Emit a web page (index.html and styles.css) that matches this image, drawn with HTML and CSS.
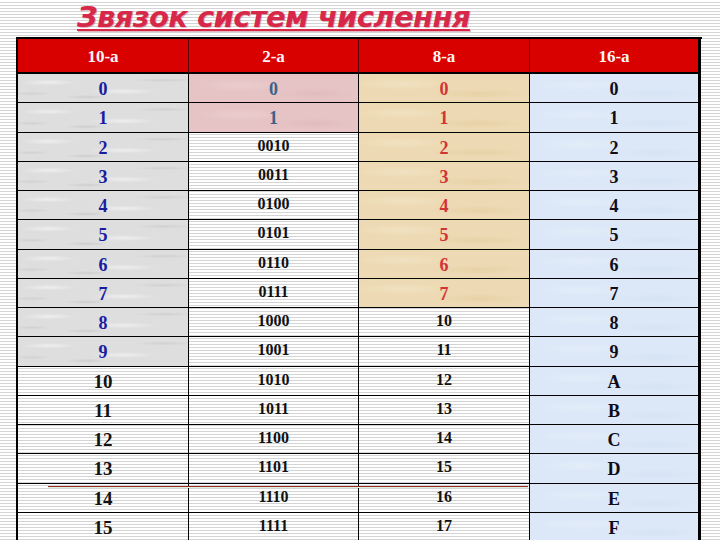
FILE: index.html
```html
<!DOCTYPE html>
<html lang="uk">
<head>
<meta charset="utf-8">
<title>Звязок систем числення</title>
<link rel="stylesheet" href="styles.css">
</head>
<body>
<div class="page">
  <h1 class="title">Звязок систем числення</h1>
  <div class="grid">
    <div class="hd">10-a</div><div class="hd">2-a</div><div class="hd">8-a</div><div class="hd last">16-a</div>

    <div class="c gray blue">0</div><div class="c pink steel">0</div><div class="c sand red">0</div><div class="c sky last">0</div>
    <div class="c gray blue">1</div><div class="c pink steel">1</div><div class="c sand red">1</div><div class="c sky last">1</div>
    <div class="c gray blue">2</div><div class="c bin">0010</div><div class="c sand red">2</div><div class="c sky last">2</div>
    <div class="c gray blue">3</div><div class="c bin">0011</div><div class="c sand red">3</div><div class="c sky last">3</div>
    <div class="c gray blue">4</div><div class="c bin">0100</div><div class="c sand red">4</div><div class="c sky last">4</div>
    <div class="c gray blue">5</div><div class="c bin">0101</div><div class="c sand red">5</div><div class="c sky last">5</div>
    <div class="c gray blue">6</div><div class="c bin">0110</div><div class="c sand red">6</div><div class="c sky last">6</div>
    <div class="c gray blue">7</div><div class="c bin">0111</div><div class="c sand red">7</div><div class="c sky last">7</div>
    <div class="c gray blue">8</div><div class="c bin">1000</div><div class="c bin">10</div><div class="c sky last">8</div>
    <div class="c gray blue">9</div><div class="c bin">1001</div><div class="c bin">11</div><div class="c sky last">9</div>
    <div class="c big">10</div><div class="c bin">1010</div><div class="c bin">12</div><div class="c sky last">A</div>
    <div class="c big">11</div><div class="c bin">1011</div><div class="c bin">13</div><div class="c sky last">B</div>
    <div class="c big">12</div><div class="c bin">1100</div><div class="c bin">14</div><div class="c sky last">C</div>
    <div class="c big">13</div><div class="c bin">1101</div><div class="c bin">15</div><div class="c sky last">D</div>
    <div class="c big">14</div><div class="c bin">1110</div><div class="c bin">16</div><div class="c sky last">E</div>
    <div class="c big">15</div><div class="c bin">1111</div><div class="c bin">17</div><div class="c sky last">F</div>
  </div>
  <div class="strike"></div>
</div>
</body>
</html>
```

FILE: styles.css
```css
html, body {
  margin: 0;
  padding: 0;
}
body {
  width: 720px;
  height: 540px;
  overflow: hidden;
  background: repeating-linear-gradient(to bottom, #ffffff 0, #ffffff 2px, #d4d4d4 2px, #d4d4d4 3px);
  font-family: "Liberation Serif", "Times New Roman", "DejaVu Serif", serif;
}
.page {
  position: relative;
  width: 720px;
  height: 540px;
}
.title {
  margin: 0;
  height: 37px;
  padding-left: 77px;
  padding-top: 2px;
  box-sizing: border-box;
  font-family: "DejaVu Sans", Verdana, sans-serif;
  font-weight: bold;
  font-style: italic;
  font-size: 29px;
  line-height: 30px;
  color: #d8284a;
  text-decoration: underline;
  text-decoration-thickness: 2px;
  text-underline-offset: 2px;
  letter-spacing: -0.6px;
  text-shadow: 1px 1px 0 rgba(150, 20, 40, 0.3);
}
.grid {
  margin-left: 16px;
  width: 686px;
  display: grid;
  grid-template-columns: 171px 170px 171px 171px;
  grid-template-rows: 35px repeat(16, 29.25px);
  border-left: 2px solid #000;
  border-top: 2px solid #000;
  box-sizing: border-box;
}
.hd {
  background: #d90000;
  color: #fff6f6;
  font-weight: bold;
  font-size: 17px;
  display: flex;
  align-items: center;
  justify-content: center;
  padding-top: 3px;
  border-right: 1px solid #5a0000;
  border-bottom: 2px solid #000;
}
.hd.last, .c.last {
  border-right: 3px solid #000;
}
.c {
  display: flex;
  align-items: center;
  justify-content: center;
  padding-top: 3px;
  font-weight: bold;
  font-size: 18px;
  color: #111;
  border-right: 1px solid #000;
  border-bottom: 1px solid #000;
}
.gray {
  background-color: #dedede;
  background-image:
    radial-gradient(ellipse 28px 3px at 18% 30%, rgba(245,245,245,0.7), rgba(245,245,245,0) 100%),
    radial-gradient(ellipse 34px 3px at 62% 62%, rgba(245,245,245,0.7), rgba(245,245,245,0) 100%),
    radial-gradient(ellipse 22px 2px at 40% 82%, rgba(185,185,185,0.45), rgba(185,185,185,0) 100%),
    radial-gradient(ellipse 30px 2px at 86% 22%, rgba(190,190,190,0.45), rgba(190,190,190,0) 100%),
    radial-gradient(ellipse 20px 2px at 8% 70%, rgba(190,190,190,0.4), rgba(190,190,190,0) 100%);
}
.pink {
  background-color: #e6c4c5;
  background-image:
    radial-gradient(ellipse 40px 6px at 30% 40%, rgba(238,212,212,0.6), rgba(238,212,212,0) 100%),
    radial-gradient(ellipse 40px 6px at 75% 70%, rgba(220,180,182,0.5), rgba(220,180,182,0) 100%);
}
.sand {
  background-color: #eddab4;
  background-image:
    radial-gradient(ellipse 45px 6px at 25% 35%, rgba(245,230,202,0.6), rgba(245,230,202,0) 100%),
    radial-gradient(ellipse 50px 5px at 70% 70%, rgba(225,200,155,0.5), rgba(225,200,155,0) 100%);
}
.sky {
  background-color: #dce8f7;
  background-image:
    radial-gradient(ellipse 45px 6px at 30% 40%, rgba(232,240,251,0.6), rgba(232,240,251,0) 100%),
    radial-gradient(ellipse 45px 5px at 75% 70%, rgba(208,222,240,0.5), rgba(208,222,240,0) 100%);
  color: #0d0d1a;
}
.blue { color: #1b1ba0; }
.steel { color: #3a6288; }
.red { color: #d23436; }
.bin {
  font-size: 16px;
  padding-top: 0;
  padding-bottom: 2px;
}
.big {
  font-size: 19px;
  padding-top: 2px;
}
.strike {
  position: absolute;
  left: 48px;
  top: 486px;
  width: 480px;
  height: 1px;
  background: #9a2a22;
  border-bottom: 1px solid #dfeedd;
}
```
